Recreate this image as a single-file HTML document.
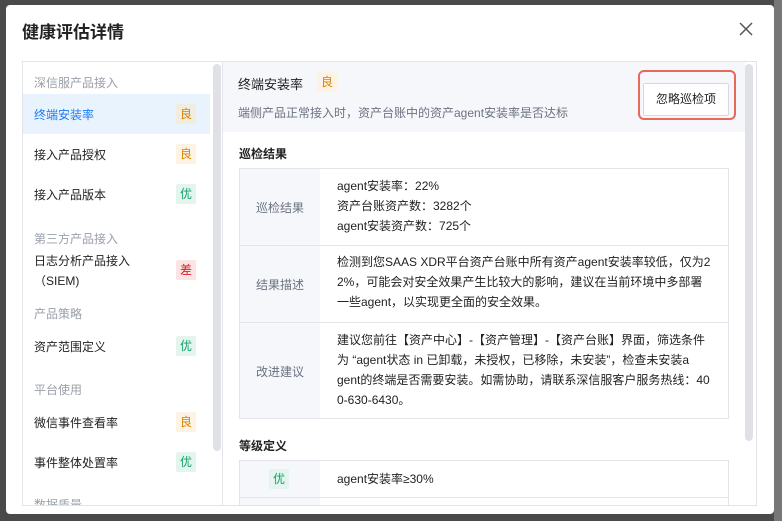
<!DOCTYPE html>
<html><head><meta charset="utf-8"><style>
*{margin:0;padding:0;box-sizing:border-box}
body{width:782px;height:521px;overflow:hidden;background:#4a4a4a;font-family:"Liberation Sans","Noto Sans CJK SC",sans-serif;font-size:12px;color:#222;position:relative}
.a{position:absolute}
.modal{left:6px;top:5px;width:768px;height:509px;background:#fff;border-radius:4px}
.tag{position:absolute;width:20px;height:20px;line-height:20px;text-align:center;font-size:12px;border-radius:2px}
.l{background:#fdf3e4;color:#d98200}
.y{background:#e3f5ee;color:#17a06a}
.c{background:#fce4e4;color:#d4202a}
.grp{position:absolute;left:34px;color:#9aa0aa;font-size:12px}
.it{position:absolute;left:34px;color:#222;font-size:12px}
.nw{white-space:nowrap}
.cell{position:absolute;left:337px;line-height:20px;white-space:nowrap;color:#222}
.lab{position:absolute;left:240px;width:80px;text-align:center;color:#6b7280}
</style></head><body>
<div class="a" style="left:774px;top:0;width:8px;height:521px;background:#777"></div>
<div class="a modal"></div>
<div class="a" style="left:22px;top:18px;font-size:17px;font-weight:bold;color:#222">健康评估详情</div>
<svg class="a" style="left:739px;top:22px" width="14" height="14" viewBox="0 0 14 14"><path d="M1 1L13 13M13 1L1 13" stroke="#555" stroke-width="1.5"/></svg>
<div class="a" style="left:22px;top:61px;width:735px;height:446px;border:1px solid #e2e4ea"></div>
<div class="a" style="left:222px;top:62px;width:1px;height:444px;background:#e2e4ea"></div>
<div class="a" style="left:213px;top:64px;width:8px;height:387px;background:#dfe1e7;border-radius:4px"></div>
<div class="grp" style="top:74px">深信服产品接入</div>
<div class="a" style="left:23px;top:94px;width:187px;height:40px;background:#e8f3fe"></div>
<div class="it" style="top:106px;color:#1f7bf0">终端安装率</div><div class="tag l" style="left:176px;top:104px;background:#f0ecdf">良</div>
<div class="it" style="top:146px">接入产品授权</div><div class="tag l" style="left:176px;top:144px">良</div>
<div class="it" style="top:186px">接入产品版本</div><div class="tag y" style="left:176px;top:184px">优</div>
<div class="grp" style="top:230px">第三方产品接入</div>
<div class="it" style="top:251px;line-height:20px">日志分析产品接入<br>（SIEM)</div><div class="tag c" style="left:176px;top:260px">差</div>
<div class="grp" style="top:305px">产品策略</div>
<div class="it" style="top:338px">资产范围定义</div><div class="tag y" style="left:176px;top:336px">优</div>
<div class="grp" style="top:381px">平台使用</div>
<div class="it" style="top:414px">微信事件查看率</div><div class="tag l" style="left:176px;top:412px">良</div>
<div class="it" style="top:454px">事件整体处置率</div><div class="tag y" style="left:176px;top:452px">优</div>
<div class="grp" style="top:496px">数据质量</div>
<div class="a" style="left:223px;top:62px;width:522px;height:70px;background:#f6f7fb"></div>
<div class="a" style="left:238px;top:74px;font-size:13px">终端安装率</div><div class="tag l" style="left:317px;top:72px">良</div>
<div class="a" style="left:238px;top:104px;color:#6b7280">端侧产品正常接入时，资产台账中的资产agent安装率是否达标</div>
<div class="a" style="left:638px;top:70px;width:98px;height:50px;border:2px solid #e8685a;border-radius:6px"></div>
<div class="a" style="left:643px;top:83px;width:86px;height:33px;border:1px solid #d6d9e0;background:#fff;border-radius:2px;text-align:center;line-height:31px">忽略巡检项</div>
<div class="a" style="left:745px;top:64px;width:8px;height:377px;background:#dfe1e7;border-radius:4px"></div>
<div class="a" style="left:239px;top:145px;font-weight:bold;font-size:12px">巡检结果</div>
<div class="a" style="left:239px;top:168px;width:490px;height:251px;border:1px solid #e2e4ea"></div>
<div class="a" style="left:240px;top:169px;width:80px;height:249px;background:#f6f7fb"></div>
<div class="a" style="left:240px;top:245px;width:488px;height:1px;background:#e2e4ea"></div>
<div class="a" style="left:240px;top:322px;width:488px;height:1px;background:#e2e4ea"></div>
<div class="lab" style="top:199px">巡检结果</div>
<div class="cell" style="top:176px">agent安装率：22%<br>资产台账资产数：3282个<br>agent安装资产数：725个</div>
<div class="lab" style="top:276px">结果描述</div>
<div class="cell" style="top:252px">检测到您SAAS XDR平台资产台账中所有资产agent安装率较低，仅为2<br>2%，可能会对安全效果产生比较大的影响，建议在当前环境中多部署<br>一些agent，以实现更全面的安全效果。</div>
<div class="lab" style="top:363px">改进建议</div>
<div class="cell" style="top:330px">建议您前往【资产中心】-【资产管理】-【资产台账】界面，筛选条件<br>为 “agent状态 in 已卸载，未授权，已移除，未安装”，检查未安装a<br>gent的终端是否需要安装。如需协助，请联系深信服客户服务热线：40<br>0-630-6430。</div>
<div class="a" style="left:239px;top:437px;font-weight:bold">等级定义</div>
<div class="a" style="left:239px;top:460px;width:490px;height:50px;border:1px solid #e2e4ea"></div>
<div class="a" style="left:240px;top:461px;width:80px;height:46px;background:#f6f7fb"></div>
<div class="a" style="left:240px;top:497px;width:488px;height:1px;background:#e2e4ea"></div>
<div class="tag y" style="left:269px;top:469px">优</div>
<div class="cell" style="top:469px">agent安装率≥30%</div>
<div class="a" style="left:6px;top:507px;width:768px;height:14px;background:#4a4a4a"></div>
<div class="a" style="left:6px;top:505px;width:768px;height:9px;background:#fff;border-radius:0 0 4px 4px"></div>
<div class="a" style="left:22px;top:505px;width:735px;height:1px;background:#e2e4ea"></div>
</body></html>
